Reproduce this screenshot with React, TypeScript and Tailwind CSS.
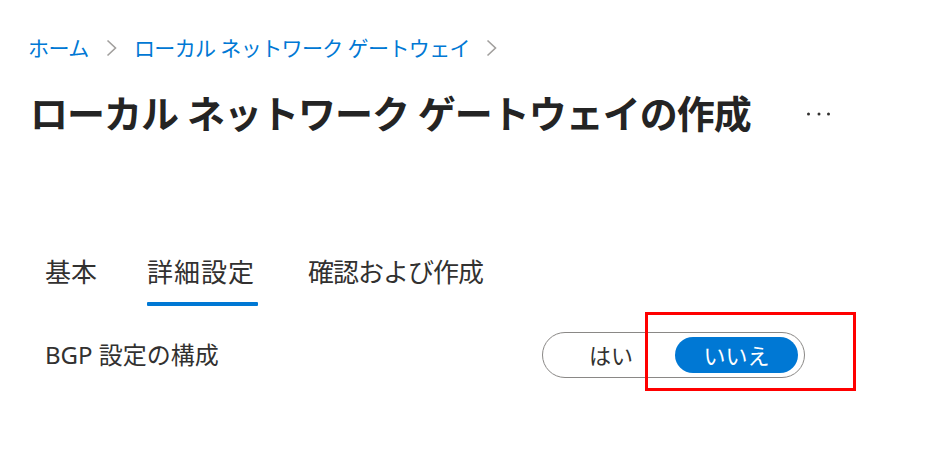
import React from "react";

const FONT = '"Noto Sans", "Noto Sans CJK JP", sans-serif';

function Chevron() {
  return (
    <svg width="13" height="20" viewBox="0 0 13 20" className="shrink-0">
      <path d="M2.5 2.5 L10.5 10 L2.5 17.5" fill="none" stroke="#a19f9d" strokeWidth="1.6" />
    </svg>
  );
}

export default function App() {
  return (
    <div
      className="relative w-[942px] h-[454px] bg-white overflow-hidden"
      style={{ fontFamily: FONT }}
    >
      {/* Breadcrumb */}
      <div className="flex items-center h-[28px] mt-[34px] ml-[28px] text-[21px] leading-[28px] text-[#0078d4]">
        <span className="tracking-[-0.5px]">ホーム</span>
        <span className="ml-[16px]">
          <Chevron />
        </span>
        <span className="ml-[16px] tracking-[-0.6px]">ローカル ネットワーク ゲートウェイ</span>
        <span className="ml-[15px]">
          <Chevron />
        </span>
      </div>

      {/* Title */}
      <div className="flex items-center h-[48px] mt-[27px] ml-[30px]">
        <h1 className="text-[38px] leading-[48px] font-semibold tracking-[-1px] text-[#242424]">
          ローカル ネットワーク ゲートウェイの作成
        </h1>
        <svg width="24" height="4" viewBox="0 0 24 4" className="ml-[56px] mt-[2px]">
          <circle cx="1.5" cy="2" r="1.5" fill="#323130" />
          <circle cx="12" cy="2" r="1.5" fill="#323130" />
          <circle cx="21.5" cy="2" r="1.5" fill="#323130" />
        </svg>
      </div>

      {/* Tabs */}
      <div className="flex items-start mt-[118px] text-[26px] leading-[34px] text-[#323130]">
        <div className="ml-[45px]">基本</div>
        <div className="ml-[50px] w-[111px] flex flex-col">
          <span className="tracking-[1px]">詳細設定</span>
          <span className="mt-[13px] h-[4px] w-full bg-[#0078d4] rounded-[1px]" />
        </div>
        <div className="ml-[50px] tracking-[-1px]">確認および作成</div>
      </div>

      {/* BGP row */}
      <div className="flex items-center h-[46px] mt-[26px]">
        <div className="w-[542px] shrink-0 pl-[45px] text-[24px] text-[#323130] leading-[30px]">
          BGP 設定の構成
        </div>
        <div className="flex items-center shrink-0 w-[263px] h-[46px] rounded-full border-[1.5px] border-[#8a8886] pl-[4px]">
          <button className="w-[128px] h-[36px] rounded-full text-[22px] leading-[36px] text-[#323130]">
            はい
          </button>
          <button className="w-[123px] h-[36px] rounded-full bg-[#0078d4] text-[22px] leading-[36px] text-white">
            いいえ
          </button>
        </div>
      </div>

      {/* Red annotation box */}
      <div className="absolute left-[645px] top-[312px] w-[211px] h-[79px] border-[3px] border-[#ff0000] pointer-events-none" />
    </div>
  );
}
